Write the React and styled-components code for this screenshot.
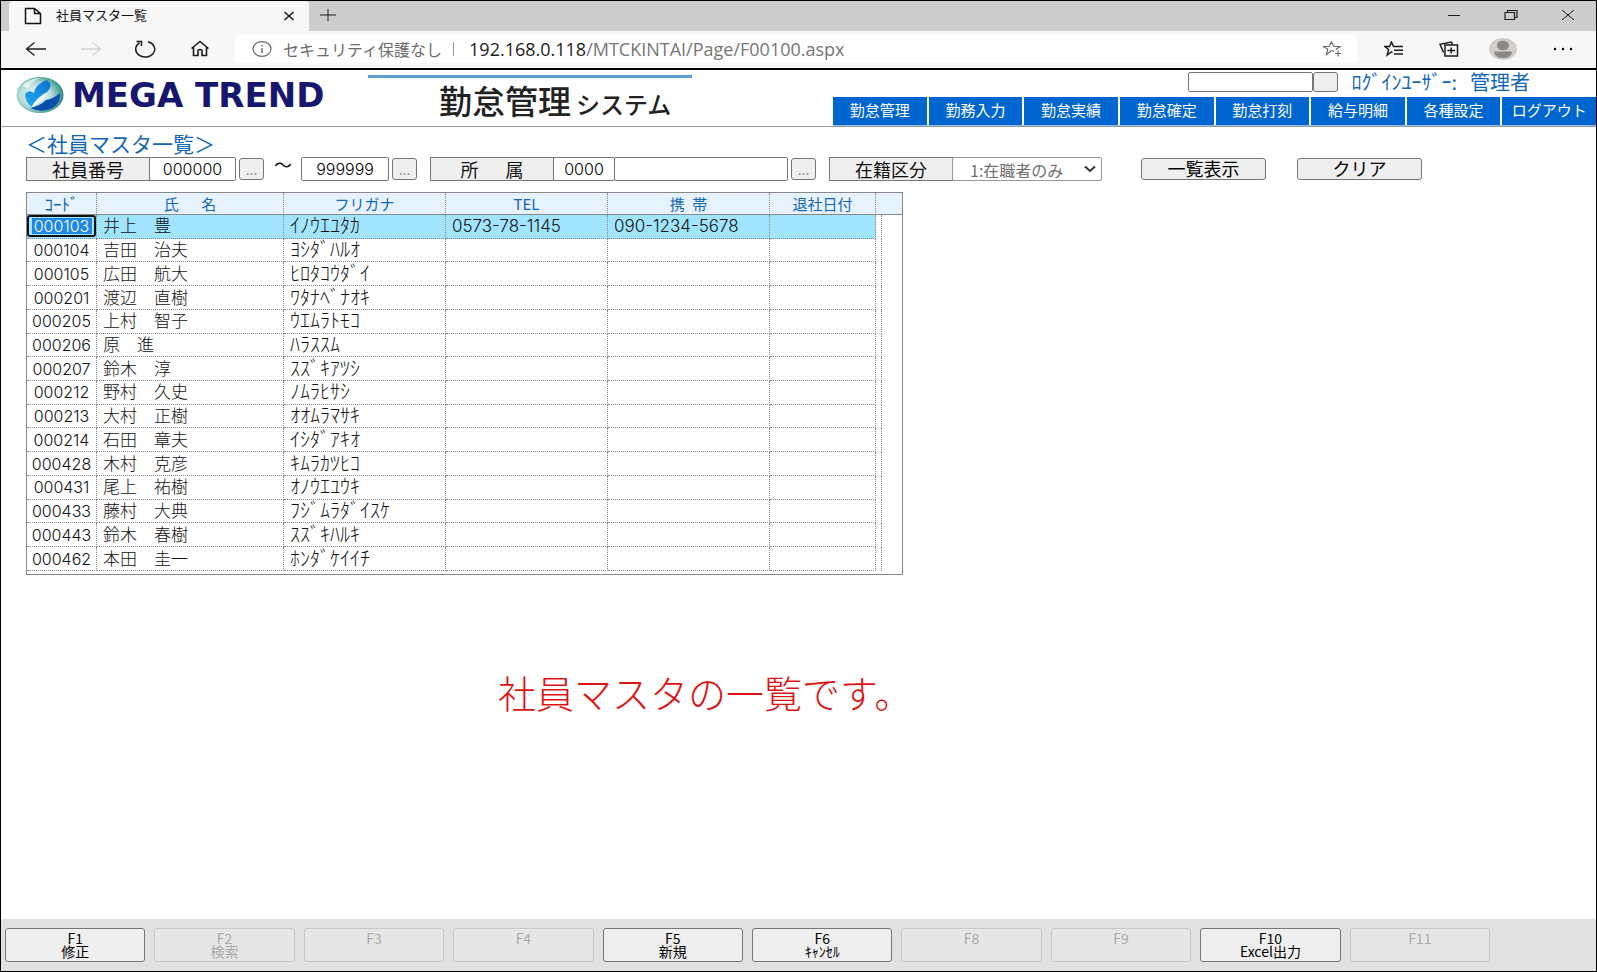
import styled, { createGlobalStyle } from "styled-components";

const employees = [
    { code: "000103", name: "井上　豊", kana: "ｲﾉｳｴﾕﾀｶ", tel: "0573-78-1145", mobile: "090-1234-5678" },
    { code: "000104", name: "吉田　治夫", kana: "ﾖｼﾀﾞﾊﾙｵ" },
    { code: "000105", name: "広田　航大", kana: "ﾋﾛﾀｺｳﾀﾞｲ" },
    { code: "000201", name: "渡辺　直樹", kana: "ﾜﾀﾅﾍﾞﾅｵｷ" },
    { code: "000205", name: "上村　智子", kana: "ｳｴﾑﾗﾄﾓｺ" },
    { code: "000206", name: "原　進", kana: "ﾊﾗｽｽﾑ" },
    { code: "000207", name: "鈴木　淳", kana: "ｽｽﾞｷｱﾂｼ" },
    { code: "000212", name: "野村　久史", kana: "ﾉﾑﾗﾋｻｼ" },
    { code: "000213", name: "大村　正樹", kana: "ｵｵﾑﾗﾏｻｷ" },
    { code: "000214", name: "石田　章夫", kana: "ｲｼﾀﾞｱｷｵ" },
    { code: "000428", name: "木村　克彦", kana: "ｷﾑﾗｶﾂﾋｺ" },
    { code: "000431", name: "尾上　祐樹", kana: "ｵﾉｳｴﾕｳｷ" },
    { code: "000433", name: "藤村　大典", kana: "ﾌｼﾞﾑﾗﾀﾞｲｽｹ" },
    { code: "000443", name: "鈴木　春樹", kana: "ｽｽﾞｷﾊﾙｷ" },
    { code: "000462", name: "本田　圭一", kana: "ﾎﾝﾀﾞｹｲｲﾁ" },
];

const menus = ["勤怠管理", "勤務入力", "勤怠実績", "勤怠確定", "勤怠打刻", "給与明細", "各種設定", "ログアウト"];

const functionKeys = [
    { key: "F1", label: "修正" },
    { key: "F2", label: "検索", disabled: true },
    { key: "F3", disabled: true },
    { key: "F4", disabled: true },
    { key: "F5", label: "新規" },
    { key: "F6", label: "ｷｬﾝｾﾙ" },
    { key: "F8", disabled: true },
    { key: "F9", disabled: true },
    { key: "F10", label: "Excel出力" },
    { key: "F11", disabled: true },
];

const columnWidths = [70, 187, 162, 162, 162, 106, 6, 20];

function BrowserBar() {
    return (
        <>
            <TabStrip>
                <Tab>
                    <Icon width="18" height="18" viewBox="0 0 18 18">
                        <path d="M1.5 1.5h9l6 5v10h-15zM10.500 1.500v5h6" strokeWidth="1.500" />
                    </Icon>
                    <TabTitle>社員マスタ一覧</TabTitle>
                    <IconButton aria-label="タブを閉じる" $width={24}>
                        <Icon width="12" height="12" viewBox="0 0 12 12">
                            <path d="M1.500 2l9 8M10.500 2l-9 8" strokeWidth="1.600" />
                        </Icon>
                    </IconButton>
                </Tab>
                <IconButton aria-label="新しいタブ" $width={38}>
                    <Icon width="18" height="14" viewBox="0 0 18 14">
                        <path d="M1 7h16M9 1v12" />
                    </Icon>
                </IconButton>
                <WindowButtons>
                    <IconButton aria-label="最小化" $width={57}>
                        <Icon width="14" height="14" viewBox="0 0 14 14">
                            <path d="M1 7.500h12" />
                        </Icon>
                    </IconButton>
                    <IconButton aria-label="元に戻す" $width={57}>
                        <Icon width="14" height="12" viewBox="0 0 14 12">
                            <path d="M1 3.500h9.500v7h-9.500zM3.500 3.500v-2h9.500v7h-2.500" strokeWidth="1.200" />
                        </Icon>
                    </IconButton>
                    <IconButton aria-label="閉じる" $width={57}>
                        <Icon width="14" height="12" viewBox="0 0 14 12">
                            <path d="M1 1l12 10M13 1L1 11" />
                        </Icon>
                    </IconButton>
                </WindowButtons>
            </TabStrip>
            <Toolbar>
                <IconButton aria-label="戻る" $width={54}>
                    <Icon width="22" height="16" viewBox="0 0 22 16">
                        <path d="M21 8H1.500M9.500 1.500L1.500 8l8 6.500" strokeWidth="1.300" />
                    </Icon>
                </IconButton>
                <IconButton aria-label="進む" disabled $width={55}>
                    <Icon width="22" height="16" viewBox="0 0 22 16">
                        <path d="M1 8h19.500M12.500 1.500l8 6.500-8 6.500" strokeWidth="1.300" />
                    </Icon>
                </IconButton>
                <IconButton aria-label="更新" $width={54}>
                    <Icon width="22" height="18" viewBox="0 0 22 18">
                        <path d="M14 1.800A9.500 7.800 0 1 1 5.500 3M2.500 1.500h5v4.500" strokeWidth="1.500" />
                    </Icon>
                </IconButton>
                <IconButton aria-label="ホーム" $width={56}>
                    <Icon width="20" height="17" viewBox="0 0 20 17">
                        <path d="M1.500 8.500L10 1.500l8.500 7M3.500 7v8.500h4.500v-4.500q0-1.500 2-1.500t2 1.500v4.500h4.500V7" strokeWidth="1.600" />
                    </Icon>
                </IconButton>
                <AddressBar>
                    <Icon width="20" height="16" viewBox="0 0 20 16" $color="#6b6b6b">
                        <ellipse cx="10" cy="8" rx="9" ry="7.300" strokeWidth="1.200" />
                        <path d="M10 7v5M10 4v1.500" strokeWidth="1.400" />
                    </Icon>
                    <Security>セキュリティ保護なし</Security>
                    <Divider />
                    <Url><b>192.168.0.118</b>/MTCKINTAI/Page/F00100.aspx</Url>
                    <IconButton aria-label="お気に入りに追加" $width={50}>
                        <Icon width="20" height="16" viewBox="0 0 20 16" $color="#6b6b6b">
                            <path d="M12 10.500l-2.500-1-5 4 1.200-5.500L1 5.500h6L9.500 1 12 5.500h6l-4.200 3M16 9.500v6M13 12.500h6" strokeWidth="1.200" />
                        </Icon>
                    </IconButton>
                </AddressBar>
                <IconButton aria-label="お気に入り" $width={56}>
                    <Icon width="20" height="16" viewBox="0 0 20 16">
                        <path d="M11 5.500H9.500L7.500 1 5.500 5.500H1l3.600 3L3.200 14l4.300-3.200 1 .7M11 5.500h8M10 9.300h9M10 13h9" strokeWidth="1.500" />
                    </Icon>
                </IconButton>
                <IconButton aria-label="コレクション" $width={54}>
                    <Icon width="20" height="16" viewBox="0 0 20 16">
                        <path d="M6 4h12.500v11H6zM12.200 6.500v6M8.500 9.500h7.500M4.500 11.500L1 3.200 12.500 1l1 3" strokeWidth="1.500" />
                    </Icon>
                </IconButton>
                <IconButton aria-label="プロフィール" $width={54}>
                    <svg width="28" height="22" viewBox="0 0 28 22">
                        <ellipse cx="14" cy="11" rx="14" ry="11" fill="#d0cdca" />
                        <ellipse cx="14" cy="7.500" rx="6" ry="4.800" fill="#8b8785" />
                        <path d="M5 14.500q0-1 1.500-1h15q1.500 0 1.500 1-1.500 5.500-9 5.500t-9-5.500z" fill="#8b8785" />
                    </svg>
                </IconButton>
                <IconButton aria-label="設定など" $width={66}>
                    <svg width="20" height="4" viewBox="0 0 20 4">
                        <circle cx="2" cy="2" r="1.200" /><circle cx="10" cy="2" r="1.200" /><circle cx="18" cy="2" r="1.200" />
                    </svg>
                </IconButton>
            </Toolbar>
        </>
    );
}

function Globe() {
    return (
        <svg width="48" height="38" viewBox="0 0 48 38">
            <defs>
                <radialGradient id="sea" cx="0.400" cy="0.500" r="0.620">
                    <stop offset="0" stopColor="#f4fcfb" />
                    <stop offset="0.550" stopColor="#b5dcd6" />
                    <stop offset="0.850" stopColor="#4fa79a" />
                    <stop offset="1" stopColor="#16796c" />
                </radialGradient>
                <linearGradient id="leaf" x1="1" y1="0" x2="0.200" y2="1">
                    <stop offset="0" stopColor="#0a6fd0" />
                    <stop offset="1" stopColor="#22a8f0" />
                </linearGradient>
            </defs>
            <ellipse cx="24" cy="19" rx="23.500" ry="18" fill="url(#sea)" />
            <path d="M6 10Q13 2 25 2Q15 5 12 12z" fill="#fff" opacity="0.600" />
            <path d="M9 18Q13 13 18 17Q19 8 31 4Q38 9 31 16Q22 20 16 31Q10 28 9 18z" fill="url(#leaf)" />
            <path d="M14 32Q24 30 30 24Q37 23 44 17Q45 26 38 31Q27 38 14 32z" fill="#0a4fae" />
            <path d="M15 32Q19 22 32 17Q27 25 15 32z" fill="#effcff" />
        </svg>
    );
}

function EmployeeTable() {
    return (
        <Grid>
            <colgroup>
                {columnWidths.map((width, i) => <Col key={i} $width={width} />)}
            </colgroup>
            <thead>
                <tr>
                    <Th $small>ｺｰﾄﾞ</Th>
                    <Th>氏&emsp;&ensp;名</Th>
                    <Th>フリガナ</Th>
                    <Th>TEL</Th>
                    <Th>携&ensp;帯</Th>
                    <Th>退社日付</Th>
                    <Th colSpan={2} />
                </tr>
            </thead>
            <tbody>
                {employees.map((e, i) => (
                    <Row key={e.code} $selected={i === 0}>
                        <CodeCell>
                            {i === 0 ? <CodeInput aria-label="コード" defaultValue={e.code} /> : e.code}
                        </CodeCell>
                        <Td $size={17}>{e.name}</Td>
                        <Td $size={20}>{e.kana}</Td>
                        <Td $size={17}>{e.tel}</Td>
                        <Td $size={17}>{e.mobile}</Td>
                        <Td />
                        <SpacerTd />
                        {i === 0 && <ScrollTd rowSpan={employees.length + 1} />}
                    </Row>
                ))}
                <TailRow><td colSpan={7} /></TailRow>
            </tbody>
        </Grid>
    );
}

function App() {
    return (
        <Window>
            <GlobalStyle />
            <BrowserBar />
            <Header>
                <Brand><Globe />MEGA TREND</Brand>
                <SystemName>勤怠管理<small>システム</small></SystemName>
                <HeaderRight>
                    <Login>
                        <LoginInput aria-label="検索" />
                        <LoginButton aria-label="実行" />
                        <LoginText>ﾛｸﾞｲﾝﾕｰｻﾞｰ:</LoginText>
                        <LoginText>管理者</LoginText>
                    </Login>
                    <Menu>
                        {menus.map((menu) => <MenuLink key={menu} href="#">{menu}</MenuLink>)}
                    </Menu>
                </HeaderRight>
            </Header>
            <Main>
                <PageTitle>＜社員マスタ一覧＞</PageTitle>
                <Filters>
                    <Label htmlFor="codeFrom">社員番号</Label>
                    <TextInput id="codeFrom" defaultValue="000000" $width={87} />
                    <LookupButton aria-label="社員番号（開始）を選択">...</LookupButton>
                    <Tilde>～</Tilde>
                    <TextInput aria-label="社員番号（終了）" defaultValue="999999" $width={88} />
                    <LookupButton aria-label="社員番号（終了）を選択">...</LookupButton>
                    <Group>
                        <Label htmlFor="dept">所&emsp;&ensp;属</Label>
                        <TextInput id="dept" defaultValue="0000" $width={62} />
                        <TextInput aria-label="所属名" $width={174} />
                        <LookupButton aria-label="所属を選択">...</LookupButton>
                    </Group>
                    <Group>
                        <Label htmlFor="status">在籍区分</Label>
                        <SelectBox>
                            <Select id="status"><option>1:在職者のみ</option></Select>
                            <Chevron width="12" height="8" viewBox="0 0 12 8">
                                <path d="M1 1.500l5 4.500 5-4.500" />
                            </Chevron>
                        </SelectBox>
                    </Group>
                    <ActionButtons>
                        <ActionButton>一覧表示</ActionButton>
                        <ActionButton>クリア</ActionButton>
                    </ActionButtons>
                </Filters>
                <EmployeeTable />
                <Message>社員マスタの一覧です。</Message>
            </Main>
            <Footer>
                {functionKeys.map(({ key, label = "", disabled }) => (
                    <FunctionButton key={key} disabled={disabled}>{`${key}\n${label}`}</FunctionButton>
                ))}
            </Footer>
        </Window>
    );
}

const GlobalStyle = createGlobalStyle`
    * {
        box-sizing: border-box;
    }
    body {
        margin: 0;
        background: #fff;
        color: #111;
        font-family: "Noto Sans CJK JP", sans-serif;
    }
    button, input, select {
        font-family: inherit;
        margin: 0;
    }
`;

const Window = styled.div`
    display: flex;
    flex-direction: column;
    min-height: 100vh;
    border: 1px solid #000;
    overflow: hidden;
`;

const Icon = styled.svg`
    flex: none;
    fill: none;
    stroke: ${({ $color }) => $color || "currentColor"};
`;

const IconButton = styled.button`
    display: flex;
    flex: none;
    align-items: center;
    justify-content: center;
    width: ${({ $width }) => $width}px;
    height: 28px;
    padding: 0;
    border: 0;
    background: none;
    color: #1c1c1c;
    &:disabled {
        color: #d2d2d2;
    }
`;

const TabStrip = styled.div`
    display: flex;
    height: 30px;
    padding-left: 8px;
    background: #cdcdcd;
`;

const Tab = styled.div`
    display: flex;
    align-items: center;
    width: 300px;
    padding: 0 8px 0 15px;
    border-radius: 4px 4px 0 0;
    background: #f7f7f7;
`;

const TabTitle = styled.span`
    flex: 1;
    margin-left: 14px;
    font-size: 13px;
    line-height: 16px;
    padding-bottom: 2px;
`;

const WindowButtons = styled.div`
    display: flex;
    margin-left: auto;
`;

const Toolbar = styled.div`
    display: flex;
    align-items: center;
    height: 39px;
    padding: 0 0 2px 8px;
    border-bottom: 2px solid #000;
    background: #f7f7f7;
`;

const AddressBar = styled.div`
    display: flex;
    flex: 1;
    align-items: center;
    height: 28px;
    margin: 0 9px 0 7px;
    padding-left: 17px;
    border-radius: 4px;
    background: #fff;
`;

const Security = styled.span`
    margin-left: 11px;
    color: #6b6b6b;
    font-size: 16px;
`;

const Divider = styled.span`
    width: 1px;
    height: 14px;
    margin: 0 15px 0 11px;
    background: #999;
`;

const Url = styled.span`
    flex: 1;
    color: #767676;
    font-family: "Open Sans", sans-serif;
    font-size: 18px;
    b {
        color: #1c1c1c;
        font-weight: 400;
    }
`;

const Header = styled.header`
    display: flex;
    height: 57px;
    padding-left: 15px;
    border-bottom: 1px solid #999;
`;

const Brand = styled.div`
    display: flex;
    align-items: center;
    gap: 8px;
    width: 352px;
    height: 50px;
    color: #17176f;
    font-family: "DejaVu Sans", sans-serif;
    font-size: 34px;
    font-weight: 700;
    white-space: nowrap;
`;

const SystemName = styled.h1`
    width: 324px;
    margin: 5px 0 0;
    padding-left: 71px;
    border-top: 3px solid #5a9fd4;
    color: #222;
    font-size: 33px;
    font-weight: 500;
    line-height: 44px;
    white-space: nowrap;
    small {
        margin-left: 5px;
        font-size: 24px;
    }
`;

const HeaderRight = styled.div`
    display: flex;
    flex-direction: column;
    justify-content: space-between;
    width: 763px;
    margin-left: auto;
`;

const Login = styled.div`
    display: flex;
    align-items: center;
    height: 24px;
    padding: 0 66px 0 0;
    justify-content: flex-end;
`;

const LoginInput = styled.input`
    width: 125px;
    height: 20px;
    border: 1px solid #767676;
    border-radius: 2px;
`;

const LoginButton = styled.button`
    width: 25px;
    height: 20px;
    border: 1px solid #767676;
    border-radius: 3px;
    background: #efefef;
`;

const LoginText = styled.span`
    margin-left: 13px;
    color: #1266b8;
    font-size: 20px;
    line-height: 24px;
    white-space: nowrap;
`;

const Menu = styled.nav`
    display: grid;
    grid-template-columns: repeat(8, 1fr);
    gap: 2px;
    border-bottom: 1px solid #9dbfe6;
`;

const MenuLink = styled.a`
    padding-bottom: 2px;
    background: #0066cf;
    color: #fff;
    font-size: 15px;
    line-height: 26px;
    text-align: center;
    text-decoration: none;
`;

const Main = styled.main`
    flex: 1;
    padding: 5px 25px 0;
`;

const PageTitle = styled.h2`
    margin: 0 0 3px;
    color: #1266b8;
    font-size: 21px;
    font-weight: 400;
    line-height: 22px;
`;

const Filters = styled.div`
    display: flex;
    align-items: center;
    height: 24px;
`;

const Group = styled.div`
    display: flex;
    align-items: center;
    margin-left: 13px;
`;

const Label = styled.label`
    width: 124px;
    height: 24px;
    border: 1px solid #767676;
    background: #efefef;
    font-size: 18px;
    line-height: 22px;
    text-align: center;
`;

const TextInput = styled.input`
    width: ${({ $width }) => $width}px;
    height: 24px;
    margin-left: -1px;
    padding: 0;
    border: 1px solid #767676;
    border-radius: 2px;
    font-family: Inter, sans-serif;
    font-size: 16px;
    font-weight: 300;
    text-align: center;
`;

const LookupButton = styled.button`
    width: 25px;
    height: 22px;
    margin-left: 3px;
    padding: 0;
    border: 1px solid #767676;
    border-radius: 3px;
    background: #efefef;
    color: #999;
    font-size: 14px;
    line-height: 16px;
`;

const Tilde = styled.span`
    width: 38px;
    font-size: 18px;
    line-height: 14px;
    text-align: center;
    align-self: flex-start;
`;

const SelectBox = styled.div`
    display: grid;
    align-items: center;
    margin-left: -1px;
`;

const Select = styled.select`
    grid-area: 1 / 1;
    width: 150px;
    height: 24px;
    padding: 0 0 2px 17px;
    border: 1px solid #999;
    border-radius: 2px;
    appearance: none;
    background: #fff;
    color: #707070;
    font-size: 16px;
`;

const Chevron = styled.svg`
    grid-area: 1 / 1;
    justify-self: end;
    margin-right: 6px;
    fill: none;
    stroke: #333;
    stroke-width: 2;
    pointer-events: none;
`;

const ActionButtons = styled.div`
    display: flex;
    gap: 31px;
    margin-left: 39px;
`;

const ActionButton = styled.button`
    width: 125px;
    height: 22px;
    padding: 0 0 2px;
    border: 1px solid #767676;
    border-radius: 3px;
    background: #efefef;
    font-size: 18px;
    line-height: 18px;
`;

const Grid = styled.table`
    width: 877px;
    height: 383px;
    margin-top: 11px;
    border: 1px solid #888;
    border-collapse: separate;
    border-spacing: 0;
    table-layout: fixed;
    line-height: 22px;
    white-space: nowrap;
`;

const Col = styled.col`
    width: ${({ $width }) => $width}px;
`;

const Th = styled.th`
    height: 22px;
    padding: 0;
    border-right: 1px dotted #888;
    border-bottom: 1px solid #888;
    background: #e6f2fe;
    color: #1266b8;
    font-size: ${({ $small }) => ($small ? 17 : 15)}px;
    font-weight: 400;
    line-height: 20px;
    &:last-child {
        border-right: 0;
    }
`;

const Td = styled.td`
    padding: 0 0 0 6px;
    border-right: 1px dotted #888;
    border-bottom: 1px dotted #888;
    font-family: Inter, "Noto Sans CJK JP", sans-serif;
    font-size: ${({ $size }) => $size || 16}px;
    font-weight: 300;
`;

const CodeCell = styled(Td)`
    padding: 0;
    text-align: center;
`;

const CodeInput = styled.input`
    display: block;
    width: 100%;
    height: 22px;
    padding: 0;
    border: 2px solid #111;
    border-radius: 3px;
    outline: 0;
    background: linear-gradient(#1e88e8, #1e88e8) center / 60px 16px no-repeat #a1e4ff;
    color: #fff;
    font: inherit;
    text-align: center;
`;

const SpacerTd = styled(Td)`
    padding: 0;
    border-bottom: 0;
    background: #fff;
`;

const ScrollTd = styled.td`
    padding: 0;
    background: #fff;
`;

const Row = styled.tr`
    background: ${({ $selected }) => ($selected ? "#a1e4ff" : "#fff")};
`;

const TailRow = styled.tr`
    height: 3px;
    td {
        padding: 0;
    }
`;

const Message = styled.p`
    margin: 89px 0 0 472px;
    color: #dc1414;
    font-size: 38px;
    font-weight: 300;
    line-height: 56px;
    white-space: nowrap;
`;

const Footer = styled.footer`
    display: grid;
    grid-template-columns: repeat(10, 1fr);
    gap: 9px;
    height: 52px;
    padding: 9px 106px 9px 4px;
    background: #e1e1e1;
`;

const FunctionButton = styled.button`
    display: flex;
    justify-content: center;
    align-items: flex-start;
    padding: 3px 0 0;
    border: 1px solid #767676;
    border-radius: 3px;
    background: #efefef;
    color: #000;
    font-size: 14px;
    line-height: 13px;
    white-space: pre-line;
    &:disabled {
        border-color: #c8c8c8;
        background: #e6e6e6;
        color: #aaa;
    }
`;

export default App;
